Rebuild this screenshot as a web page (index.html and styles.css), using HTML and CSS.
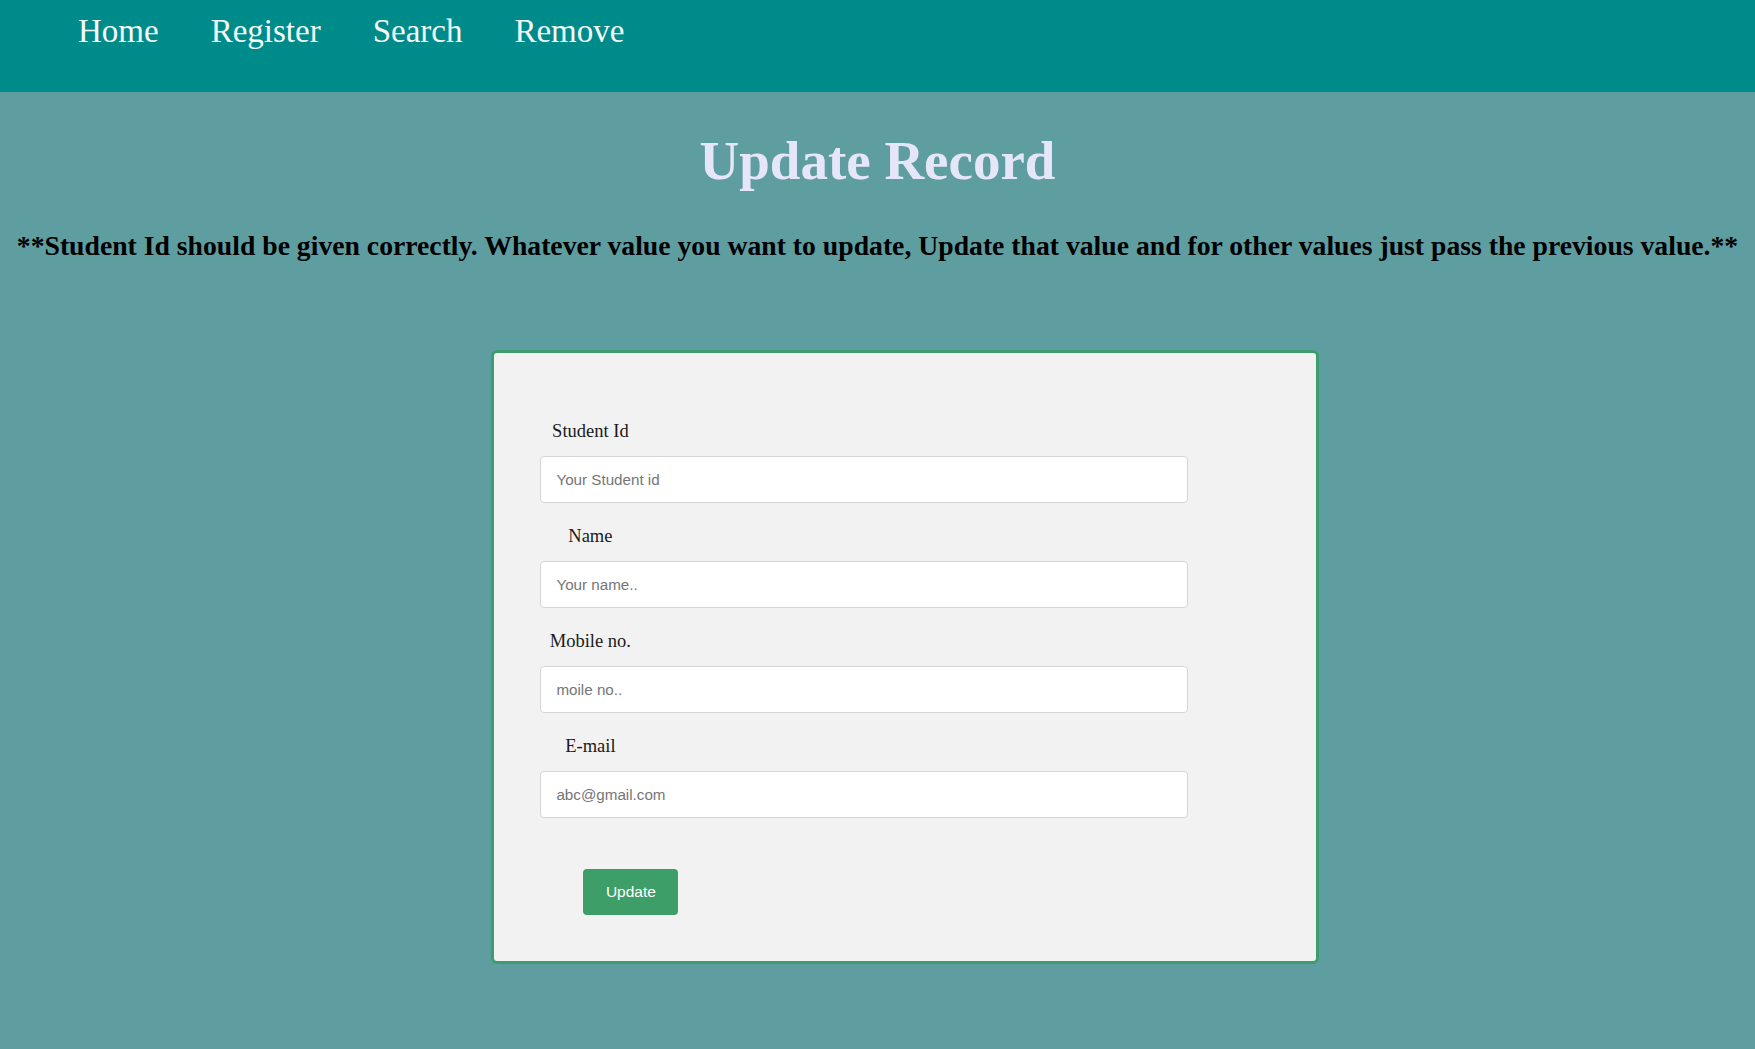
FILE: index.html
```html
<!DOCTYPE html>
<html lang="en">
<head>
<meta charset="utf-8">
<title>Update Record</title>
<link rel="stylesheet" href="styles.css">
</head>
<body>
<nav class="topnav">
  <a class="nav-link" href="#">Home</a>
  <a class="nav-link" href="#">Register</a>
  <a class="nav-link" href="#">Search</a>
  <a class="nav-link" href="#">Remove</a>
</nav>
<h1 class="title">Update Record</h1>
<p class="notice">**Student Id should be given correctly. Whatever value you want to update, Update that value and for other values just pass the previous value.**</p>
<div class="form-box">
  <form class="form">
    <div class="field">
      <label class="label">Student Id</label>
      <input class="input" type="text" placeholder="Your Student id">
    </div>
    <div class="field">
      <label class="label">Name</label>
      <input class="input" type="text" placeholder="Your name..">
    </div>
    <div class="field">
      <label class="label">Mobile no.</label>
      <input class="input" type="text" placeholder="moile no..">
    </div>
    <div class="field">
      <label class="label">E-mail</label>
      <input class="input" type="text" placeholder="abc@gmail.com">
    </div>
    <button class="btn" type="button">Update</button>
  </form>
</div>
</body>
</html>
```
FILE: styles.css
```css
* { box-sizing: border-box; }
html, body { margin: 0; padding: 0; }
body {
  background: #5f9ea0;
  font-family: "Liberation Serif", "Times New Roman", serif;
  min-height: 1049px;
}
.topnav {
  background: #008b8b;
  height: 92px;
  display: flex;
  align-items: flex-start;
  padding: 6px 0 0 52px;
}
.nav-link {
  color: #f4f9f9;
  text-decoration: none;
  font-size: 33px;
  line-height: 50px;
  padding: 0 26px;
}
.title {
  margin: 29px 0 0;
  text-align: center;
  color: #e6e6fa;
  font-size: 55px;
  line-height: 80px;
  font-weight: bold;
}
.notice {
  margin: 28px 0 0;
  text-align: center;
  color: #000;
  font-weight: bold;
  font-size: 27.7px;
  line-height: 34px;
  white-space: nowrap;
}
.form-box {
  margin: 87px 0 0 28%;
  width: 828px;
  height: 614px;
  border: 3px solid #3d9d6e;
  border-radius: 6px;
  background: #f2f2f2;
  padding: 66px 0 0 46px;
}
.form {
  display: flex;
  flex-direction: column;
  gap: 21px;
}
.field {
  display: flex;
  flex-direction: column;
  gap: 12px;
}
.label {
  width: 100px;
  text-align: center;
  font-size: 18.5px;
  line-height: 25px;
  color: #1a1a1a;
}
.input {
  width: 648px;
  height: 47px;
  border: 1px solid #d6d6d6;
  border-radius: 4px;
  background: #fff;
  padding: 0 15px;
  font-family: "Liberation Sans", Arial, sans-serif;
  font-size: 15.2px;
  color: #333;
}
.input::placeholder { color: #767676; }
.btn {
  align-self: flex-start;
  margin: 30px 0 0 43px;
  width: 95px;
  height: 46px;
  border: none;
  border-radius: 4px;
  background: #3d9e68;
  color: #fff;
  font-family: "Liberation Sans", Arial, sans-serif;
  font-size: 15.5px;
}
```
